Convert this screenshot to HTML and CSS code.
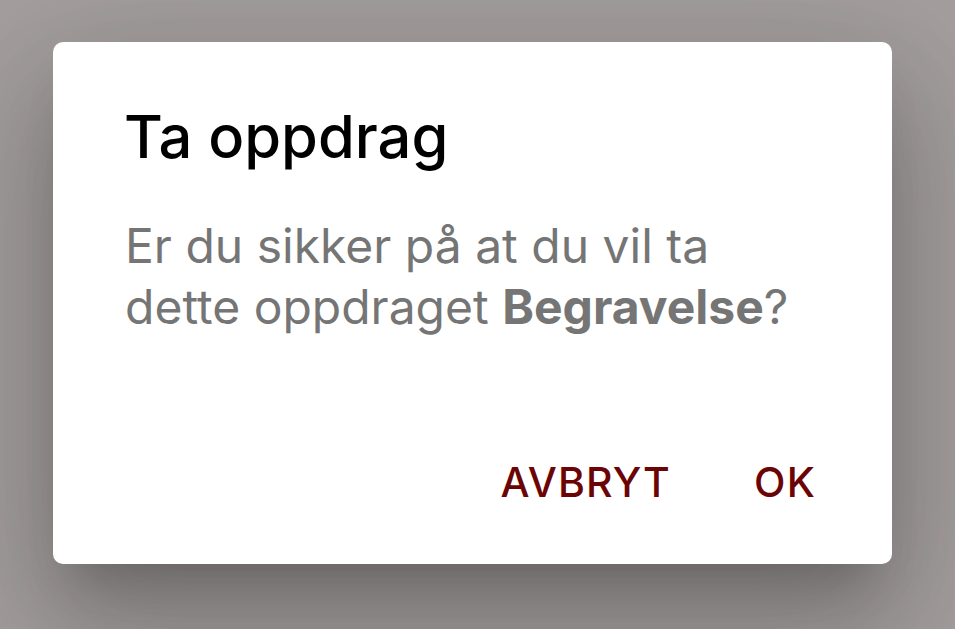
FILE: index.html
```html
<!DOCTYPE html>
<html lang="no">
<head>
<meta charset="utf-8">
<title>Ta oppdrag</title>
<link rel="stylesheet" href="styles.css">
</head>
<body>
<div class="backdrop">
  <div class="dialog" role="dialog">
    <h2 class="dialog-title">Ta oppdrag</h2>
    <div class="dialog-content">
      <p class="dialog-text">Er du sikker på at du vil ta dette oppdraget <strong>Begravelse</strong>?</p>
    </div>
    <div class="dialog-actions">
      <button class="btn">AVBRYT</button>
      <button class="btn">OK</button>
    </div>
  </div>
</div>
</body>
</html>
```
FILE: styles.css
```css
html, body {
  margin: 0;
  padding: 0;
  height: 100%;
}
body {
  background: #a49e9e;
  font-family: Inter, "Noto Sans", sans-serif;
  overflow: hidden;
}
.backdrop {
  padding: 42px 0 0 53px;
}
.dialog {
  width: 839px;
  height: 522px;
  box-sizing: border-box;
  background: #fff;
  border-radius: 10px;
  box-shadow: 0 33px 45px -21px rgba(0,0,0,0.2), 0 72px 114px 9px rgba(0,0,0,0.14), 0 27px 138px 24px rgba(0,0,0,0.12);
  display: flex;
  flex-direction: column;
}
.dialog-title {
  margin: 0;
  padding: 46px 72px 0 71px;
  font-size: 59.6px;
  font-weight: 500;
  line-height: 96px;
  color: #000;
}
.dialog-content {
  padding: 31px 72px 0;
  flex: 1;
}
.dialog-text {
  margin: 0;
  font-size: 48px;
  line-height: 61px;
  color: #757575;
  font-weight: 400;
}
.dialog-text strong {
  font-weight: 700;
}
.dialog-actions {
  display: flex;
  justify-content: flex-end;
  gap: 43px;
  padding: 0 56px 56px;
}
.btn {
  border: 0;
  background: transparent;
  font-family: inherit;
  font-size: 41px;
  font-weight: 500;
  line-height: 52px;
  letter-spacing: 0.02857em;
  color: #6b0505;
  padding: 0 20px;
  cursor: pointer;
}
```
